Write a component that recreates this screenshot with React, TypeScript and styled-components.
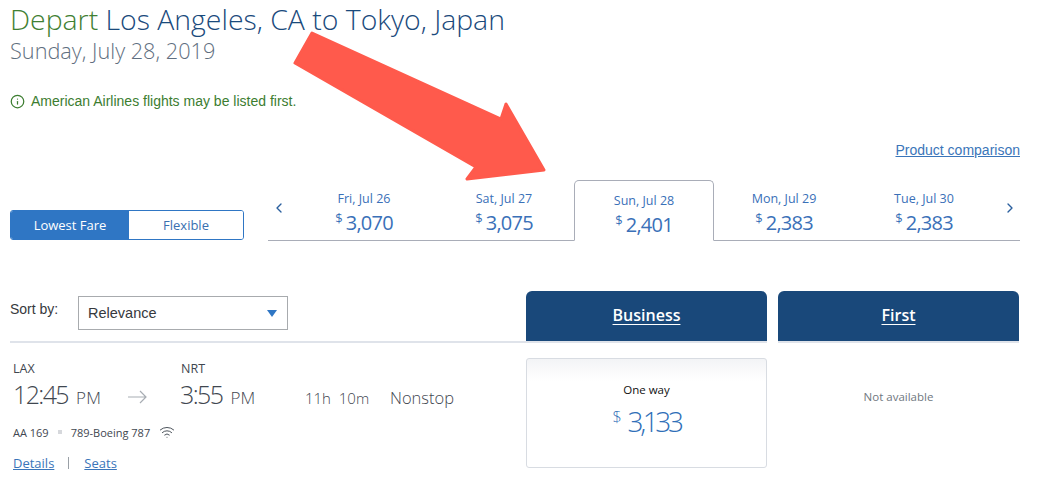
import styled, { createGlobalStyle } from "styled-components";
import { ChevronLeft, ChevronRight, Info, Wifi } from "lucide-react";

const GlobalStyle = createGlobalStyle`
  html, body {
    margin: 0;
    background: #fff;
  }
  body {
    font-family: "Open Sans", "Liberation Sans", sans-serif;
    overflow: hidden;
  }
`;

const Page = styled.div`
  position: relative;
  width: 1053px;
  height: 488px;
  overflow: hidden;
  box-sizing: border-box;
  padding-left: 10px;
`;

const Content = styled.div`
  width: 1010px;
`;

const Title = styled.h1`
  margin: 0;
  height: 37px;
  font-size: 28.4px;
  line-height: 38px;
  font-weight: 300;
  color: #1a4a7c;
  white-space: nowrap;
`;

const Depart = styled.span`
  color: #3f8033;
`;

const DateLine = styled.div`
  height: 30px;
  font-size: 21.7px;
  line-height: 28px;
  font-weight: 300;
  color: #5f6f80;
`;

const Notice = styled.div`
  display: flex;
  align-items: center;
  gap: 6px;
  margin-top: 26px;
  height: 16px;
  font-family: "Liberation Sans", sans-serif;
  font-size: 14px;
  color: #3c7d30;
`;

const CompareRow = styled.div`
  display: flex;
  justify-content: flex-end;
  margin-top: 33px;
  height: 17px;
`;

const CompareLink = styled.a`
  font-family: "Liberation Sans", sans-serif;
  font-size: 14px;
  line-height: 17px;
  color: #3a75b9;
  text-decoration: underline;
`;

const FareRow = styled.div`
  display: grid;
  grid-template-columns: 234px 752px;
  justify-content: space-between;
  align-items: end;
  margin-top: 21px;
  height: 61px;
`;

const Toggle = styled.div`
  display: grid;
  grid-template-columns: 118px 1fr;
  height: 30px;
  box-sizing: border-box;
  border: 1px solid #2f76c4;
  border-radius: 3px;
  overflow: hidden;
  margin-bottom: 1px;
`;

const ToggleOption = styled.div<{ $active?: boolean }>`
  display: flex;
  align-items: center;
  justify-content: center;
  padding-bottom: 1px;
  font-size: 13px;
  background: ${(p) => (p.$active ? "#2f76c4" : "#fff")};
  color: ${(p) => (p.$active ? "#fff" : "#3a70b0")};
`;

const Tabs = styled.div`
  display: grid;
  grid-template-columns: 26px repeat(5, 140px) 26px;
  height: 61px;
  box-sizing: border-box;
  border-bottom: 1px solid #a9adb8;
`;

const Arrow = styled.div<{ $right?: boolean }>`
  display: flex;
  justify-content: ${(p) => (p.$right ? "flex-end" : "flex-start")};
  padding-top: 20px;
  color: #2a5f9e;
`;

const Tab = styled.div<{ $active?: boolean }>`
  display: flex;
  flex-direction: column;
  align-items: center;
  box-sizing: border-box;
  height: 61px;
  color: #3a70b8;
  padding-top: ${(p) => (p.$active ? "11px" : "10px")};
  ${(p) =>
    p.$active &&
    `
    border: 1px solid #a9adb8;
    border-bottom: 1px solid #fff;
    border-radius: 5px 5px 0 0;
    background: #fff;
  `}
`;

const TabDate = styled.div`
  font-size: 12.5px;
  line-height: 18px;
`;

const TabPrice = styled.div`
  display: flex;
  gap: 4px;
  margin-top: 1px;
  font-size: 20px;
  line-height: 27px;
  letter-spacing: -0.8px;
`;

const Dollar = styled.span`
  font-size: 13px;
  line-height: 19px;
`;

const Table = styled.div`
  display: grid;
  grid-template-columns: 516px 241px 241px 12px;
  column-gap: 0;
  margin-top: 50px;
`;

const SortCell = styled.div`
  display: flex;
  align-items: flex-start;
  padding-top: 5px;
  height: 52px;
  box-sizing: border-box;
  border-bottom: 2px solid #dfe3ea;
`;

const SortLabel = styled.div`
  width: 68px;
  margin-top: 5px;
  font-family: "Liberation Sans", sans-serif;
  font-size: 14px;
  color: #36393d;
`;

const Select = styled.div`
  display: flex;
  align-items: center;
  justify-content: space-between;
  width: 210px;
  height: 34px;
  box-sizing: border-box;
  padding: 0 10px 0 9px;
  border: 1px solid #a8abae;
  font-family: "Liberation Sans", sans-serif;
  font-size: 14.5px;
  color: #36393d;
`;

const Caret = styled.span`
  width: 0;
  height: 0;
  border-left: 5.5px solid transparent;
  border-right: 5.5px solid transparent;
  border-top: 7px solid #2f76c4;
`;

const CabinHeader = styled.div<{ $last?: boolean }>`
  display: flex;
  align-items: center;
  justify-content: center;
  height: 52px;
  box-sizing: border-box;
  padding-bottom: 3px;
  margin-left: ${(p) => (p.$last ? "11px" : "0")};
  margin-right: ${(p) => (p.$last ? "-11px" : "0")};
  background: #19487a;
  border-bottom: 2px solid #dfe3ea;
  border-radius: 6px 6px 0 0;
  font-size: 16px;
  font-weight: 600;
  color: #fff;
  text-decoration: underline;
  text-underline-offset: 3px;
`;

const HeaderRule = styled.div`
  height: 52px;
`;

const FlightCell = styled.div`
  padding: 19px 0 0 3px;
  color: #3f4750;
`;

const Airports = styled.div`
  display: grid;
  grid-template-columns: 168px 1fr;
  font-size: 12.5px;
  line-height: 14px;
`;

const Times = styled.div`
  display: flex;
  align-items: baseline;
  margin-top: 2px;
  height: 32px;
  font-weight: 300;
`;

const Time = styled.div<{ $width: number }>`
  width: ${(p) => p.$width}px;
  font-size: 25px;
  line-height: 32px;
  letter-spacing: -1.6px;
  white-space: nowrap;
`;

const Meridiem = styled.span`
  margin-left: 8px;
  font-size: 17px;
  letter-spacing: 0.3px;
`;

const ArrowIcon = styled.svg`
  width: 19px;
  height: 14px;
  margin-right: 33px;
  align-self: center;
  position: relative;
  top: 3px;
`;

const Stat = styled.div<{ $width: number; $size: number }>`
  width: ${(p) => p.$width}px;
  font-size: ${(p) => p.$size}px;
  white-space: nowrap;
`;

const Equipment = styled.div`
  display: flex;
  align-items: center;
  margin-top: 13px;
  height: 18px;
  font-size: 11px;
  color: #3f4750;
`;

const Dot = styled.span`
  width: 4px;
  height: 4px;
  margin: 0 9px;
  background: #d6d8dc;
`;

const WifiMark = styled.span`
  display: flex;
  margin-left: 9px;
  color: #3f4750;
`;

const Links = styled.div`
  display: flex;
  align-items: center;
  margin-top: 13px;
  font-size: 13px;
  line-height: 18px;
`;

const FlightLink = styled.a`
  color: #3a75b9;
  text-decoration: underline;
`;

const Divider = styled.span`
  width: 1px;
  height: 12px;
  margin: 0 15px 0 14px;
  background: #9aa0a6;
`;

const FareCell = styled.div`
  margin-top: 15px;
  height: 110px;
  box-sizing: border-box;
  padding-top: 23px;
  border: 1px solid #d8dce2;
  border-radius: 3px;
  background: linear-gradient(#f3f4f6, #fff 22px);
  text-align: center;
`;

const FareLabel = styled.div`
  font-size: 11.5px;
  line-height: 16px;
  color: #111;
`;

const FarePrice = styled.div`
  display: flex;
  justify-content: center;
  gap: 6px;
  margin-top: 6px;
  font-size: 28px;
  line-height: 34px;
  font-weight: 300;
  letter-spacing: -3.4px;
  color: #2f6fb8;
`;

const FareDollar = styled.span`
  font-size: 16px;
  line-height: 26px;
  letter-spacing: 0;
`;

const Unavailable = styled.div`
  margin: 46px -11px 0 11px;
  text-align: center;
  font-size: 11.5px;
  line-height: 16px;
  color: #6f7780;
`;

const Annotation = styled.svg`
  position: absolute;
  left: 0;
  top: 0;
  width: 1053px;
  height: 488px;
  pointer-events: none;
`;

const days = [
  { date: "Fri, Jul 26", price: "3,070" },
  { date: "Sat, Jul 27", price: "3,075" },
  { date: "Sun, Jul 28", price: "2,401", active: true },
  { date: "Mon, Jul 29", price: "2,383" },
  { date: "Tue, Jul 30", price: "2,383" },
];

export default function App() {
  return (
    <Page>
      <GlobalStyle />
      <Content>
        <Title>
          <Depart>Depart</Depart> Los Angeles, CA to Tokyo, Japan
        </Title>
        <DateLine>Sunday, July 28, 2019</DateLine>
        <Notice>
          <Info size={15} strokeWidth={2} />
          American Airlines flights may be listed first.
        </Notice>
        <CompareRow>
          <CompareLink>Product comparison</CompareLink>
        </CompareRow>
        <FareRow>
          <Toggle>
            <ToggleOption $active>Lowest Fare</ToggleOption>
            <ToggleOption>Flexible</ToggleOption>
          </Toggle>
          <Tabs>
            <Arrow>
              <ChevronLeft size={16} strokeWidth={2} style={{ marginLeft: 3 }} />
            </Arrow>
            {days.map((day) => (
              <Tab key={day.date} $active={day.active}>
                <TabDate>{day.date}</TabDate>
                <TabPrice>
                  <Dollar>$</Dollar>
                  {day.price}
                </TabPrice>
              </Tab>
            ))}
            <Arrow $right>
              <ChevronRight size={16} strokeWidth={2} style={{ marginRight: 2 }} />
            </Arrow>
          </Tabs>
        </FareRow>
        <Table>
          <SortCell>
            <SortLabel>Sort by:</SortLabel>
            <Select>
              Relevance
              <Caret />
            </Select>
          </SortCell>
          <CabinHeader>Business</CabinHeader>
          <CabinHeader $last>First</CabinHeader>
          <HeaderRule />

          <FlightCell>
            <Airports>
              <span>LAX</span>
              <span>NRT</span>
            </Airports>
            <Times>
              <Time $width={115}>
                12:45<Meridiem>PM</Meridiem>
              </Time>
              <ArrowIcon viewBox="0 0 19 14" fill="none" stroke="#a8adb3" strokeWidth="1.2">
                <path d="M0 7h18M12 1l6 6-6 6" />
              </ArrowIcon>
              <Time $width={125}>
                3:55<Meridiem>PM</Meridiem>
              </Time>
              <Stat $width={85} $size={15}>11h&nbsp; 10m</Stat>
              <Stat $width={70} $size={16.5}>Nonstop</Stat>
            </Times>
            <Equipment>
              AA 169
              <Dot />
              789-Boeing 787
              <WifiMark>
                <Wifi size={16} strokeWidth={1.4} />
              </WifiMark>
            </Equipment>
            <Links>
              <FlightLink>Details</FlightLink>
              <Divider />
              <FlightLink>Seats</FlightLink>
            </Links>
          </FlightCell>
          <FareCell>
            <FareLabel>One way</FareLabel>
            <FarePrice>
              <FareDollar>$</FareDollar>
              3,133
            </FarePrice>
          </FareCell>
          <Unavailable>Not available</Unavailable>
        </Table>
      </Content>
      <Annotation viewBox="0 0 1053 488">
        <path
          d="M312 33 L295 63 L476 167 L467 179 L544 170 L506 104 L501 119 Z"
          fill="#ff5a4c"
          stroke="#ff5a4c"
          strokeWidth="3"
          strokeLinejoin="round"
        />
      </Annotation>
    </Page>
  );
}
